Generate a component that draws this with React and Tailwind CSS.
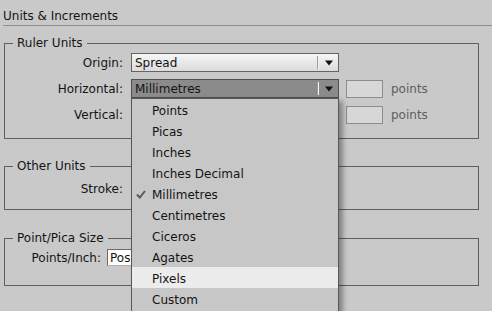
import React from 'react';

const units = ['Points', 'Picas', 'Inches', 'Inches Decimal', 'Millimetres', 'Centimetres', 'Ciceros', 'Agates', 'Pixels', 'Custom'];

const Arrow = () => (
    <div className="flex items-center h-full">
        <div className="w-[1px] h-[13px] bg-[#9a9a9a] border-r border-[#f4f4f4] box-content mr-[6px]" />
        <svg width="8" height="6" viewBox="0 0 8 6" className="mr-[5px]">
            <path d="M0 0.5 H8 L4 5.5 Z" fill="#111" />
        </svg>
    </div>
);

const Select = ({ value, pressed }) => (
    <div
        className={`w-[208px] h-[19px] flex items-center justify-between border ${pressed
            ? 'bg-[#8b8b8b] border-[#505050]'
            : 'bg-gradient-to-b from-[#f6f6f6] to-[#dcdcdc] border-[#646464]'
            }`}
    >
        <span className="pl-[3px] leading-none">{value}</span>
        <Arrow />
    </div>
);

const Units = () => (
    <div className="flex items-center gap-[8px] ml-[7px]">
        <div className="w-[37px] h-[18px] bg-[#d7d7d7] border border-[#8d8d8d]" />
        <span className="text-[#5e5e5e]">points</span>
    </div>
);

const Row = ({ label, children }) => (
    <div className="flex items-center h-[19px]">
        <div className="w-[119px] text-right pr-[1px]">{label}</div>
        <div className="ml-[7px] flex items-center">{children}</div>
    </div>
);

const Group = ({ title, className, children }) => (
    <fieldset className={`mx-[4px] w-[475px] border border-[#5f5f5f] ${className}`}>
        <legend className="ml-[8px] px-[4px] leading-[16px]">{title}</legend>
        {children}
    </fieldset>
);

export default function App() {
    return (
        <div className="relative w-[492px] h-[311px] overflow-hidden bg-[#c9c9c9] text-[12px] text-[#141414] font-['DejaVu_Sans',sans-serif]">
            {/* Panel title */}
            <div className="ml-[3px] h-[26px] border-b border-[#8e8e8e] pt-[9px] leading-[14px]">
                Units &amp; Increments
            </div>

            <Group title="Ruler Units" className="mt-[9px] pb-[14px]">
                <div className="mt-[2px] flex flex-col gap-[7px]">
                    <Row label="Origin:"><Select value="Spread" /></Row>
                    <Row label="Horizontal:"><Select value="Millimetres" pressed /><Units /></Row>
                    {/* covered by the open menu */}
                    <Row label="Vertical:"><Select /><Units /></Row>
                </div>
            </Group>

            <Group title="Other Units" className="mt-[19px] pb-[11px]">
                <div className="mt-[5px]">
                    <Row label="Stroke:"><Select /></Row>
                </div>
            </Group>

            <Group title="Point/Pica Size" className="mt-[20px] pb-[19px]">
                <div className="mt-[3px] flex items-center h-[17px]">
                    <div className="w-[96px] text-right">Points/Inch:</div>
                    <div className="ml-[6px] w-[34px] h-[17px] overflow-hidden whitespace-nowrap bg-white border border-[#6a6a6a] border-b-[#b0b0b0] flex items-center pl-[2px] leading-none">
                        Pos
                    </div>
                </div>
            </Group>

            {/* Open dropdown menu */}
            <div className="absolute left-[131px] top-[98px] w-[208px] h-[230px] bg-[#c7c7c7] border border-[#575757] shadow-[4px_3px_5px_rgba(0,0,0,0.35)]">
                {units.map((u) => (
                    <div
                        key={u}
                        className={`relative h-[21px] flex items-center pl-[20px] pt-[2px] ${u === 'Pixels' ? 'bg-[#ececec]' : ''}`}
                    >
                        {u === 'Millimetres' && (
                            <svg width="10" height="9" viewBox="0 0 10 9" className="absolute left-[4px] top-[7px]">
                                <path d="M1 4.5 L3.8 7.5 L9 1" stroke="#5a5a5a" strokeWidth="2" fill="none" />
                            </svg>
                        )}
                        {u}
                    </div>
                ))}
            </div>
        </div>
    );
}
